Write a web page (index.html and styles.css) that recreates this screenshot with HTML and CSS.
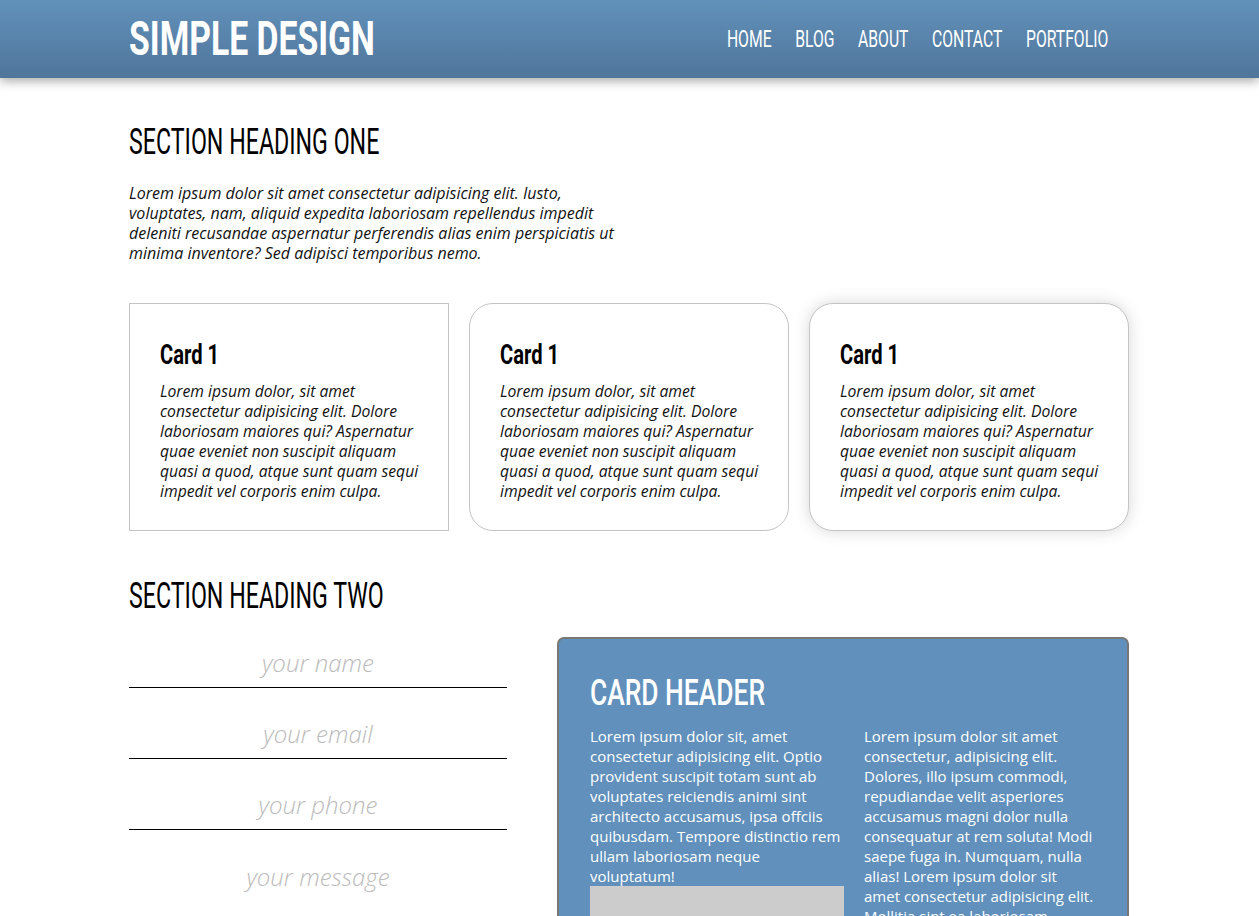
FILE: index.html
```html
<!DOCTYPE html>
<html lang="en">
<head>
<meta charset="utf-8">
<title>Simple Design</title>
<link rel="stylesheet" href="styles.css">
</head>
<body>
<header class="site-header">
  <div class="container header-inner">
    <h1 class="logo"><span class="squish">SIMPLE DESIGN</span></h1>
    <nav class="nav">
      <a href="#">HOME</a>
      <a href="#">BLOG</a>
      <a href="#">ABOUT</a>
      <a href="#">CONTACT</a>
      <a href="#">PORTFOLIO</a>
    </nav>
  </div>
</header>
<main class="container">
  <section class="section-one">
    <h2 class="section-heading"><span class="squish">SECTION HEADING ONE</span></h2>
    <p class="intro">Lorem ipsum dolor sit amet consectetur adipisicing elit. Iusto, voluptates, nam, aliquid expedita laboriosam repellendus impedit deleniti recusandae aspernatur perferendis alias enim perspiciatis ut minima inventore? Sed adipisci temporibus nemo.</p>
    <div class="cards">
      <div class="card card-square">
        <h3 class="card-title"><span class="squish">Card 1</span></h3>
        <p class="card-text">Lorem ipsum dolor, sit amet consectetur adipisicing elit. Dolore laboriosam maiores qui? Aspernatur quae eveniet non suscipit aliquam quasi a quod, atque sunt quam sequi impedit vel corporis enim culpa.</p>
      </div>
      <div class="card card-round">
        <h3 class="card-title"><span class="squish">Card 1</span></h3>
        <p class="card-text">Lorem ipsum dolor, sit amet consectetur adipisicing elit. Dolore laboriosam maiores qui? Aspernatur quae eveniet non suscipit aliquam quasi a quod, atque sunt quam sequi impedit vel corporis enim culpa.</p>
      </div>
      <div class="card card-round card-shadow">
        <h3 class="card-title"><span class="squish">Card 1</span></h3>
        <p class="card-text">Lorem ipsum dolor, sit amet consectetur adipisicing elit. Dolore laboriosam maiores qui? Aspernatur quae eveniet non suscipit aliquam quasi a quod, atque sunt quam sequi impedit vel corporis enim culpa.</p>
      </div>
    </div>
  </section>
  <section class="section-two">
    <h2 class="section-heading"><span class="squish">SECTION HEADING TWO</span></h2>
    <div class="two-col">
      <form class="contact-form">
        <input class="field" type="text" placeholder="your name">
        <input class="field" type="email" placeholder="your email">
        <input class="field" type="tel" placeholder="your phone">
        <textarea class="field field-msg" placeholder="your message"></textarea>
      </form>
      <div class="blue-card">
        <h2 class="blue-title"><span class="squish">CARD HEADER</span></h2>
        <div class="blue-cols">
          <div class="blue-col">
            <p>Lorem ipsum dolor sit, amet consectetur adipisicing elit. Optio provident suscipit totam sunt ab voluptates reiciendis animi sint architecto accusamus, ipsa offciis quibusdam. Tempore distinctio rem ullam laboriosam neque voluptatum!</p>
            <div class="img-placeholder"></div>
          </div>
          <div class="blue-col">
            <p>Lorem ipsum dolor sit amet consectetur, adipisicing elit. Dolores, illo ipsum commodi, repudiandae velit asperiores accusamus magni dolor nulla consequatur at rem soluta! Modi saepe fuga in. Numquam, nulla alias! Lorem ipsum dolor sit amet consectetur adipisicing elit. Mollitia sint ea laboriosam.</p>
          </div>
        </div>
      </div>
    </div>
  </section>
</main>
</body>
</html>
```

FILE: styles.css
```css
* { box-sizing: border-box; }
html, body { margin: 0; padding: 0; }
body {
  background: #fff;
  color: #111;
  font-family: "Open Sans", "Noto Sans", sans-serif;
}
.container {
  width: 1000px;
  margin-left: max(0px, calc((100% - 1001px) / 2));
}
.squish {
  display: inline-block;
  white-space: nowrap;
  transform-origin: left center;
}
.site-header {
  height: 78px;
  background: linear-gradient(to bottom, #6191ba, #50759b);
  box-shadow: 0 3px 10px rgba(0,0,0,0.35);
}
.header-inner {
  display: flex;
  align-items: center;
  justify-content: space-between;
  height: 78px;
}
.logo {
  margin: 0;
  color: #fff;
  font-family: "Roboto", sans-serif;
  font-weight: 700;
  font-size: 48px;
  line-height: 56px;
}
.logo .squish { transform: scaleX(0.703); }
.nav {
  display: flex;
  gap: 36px;
  margin-right: 21px;
  transform: scaleX(0.655);
  transform-origin: right center;
}
.nav a {
  color: #fff;
  text-decoration: none;
  font-family: "Roboto", sans-serif;
  font-size: 24px;
}
.section-heading {
  margin: 0;
  font-family: "Roboto", sans-serif;
  font-weight: 400;
  font-size: 37px;
  color: #000;
  line-height: 40px;
}
.section-heading .squish { transform: scaleX(0.627); }
.section-one { padding-top: 44px; }
.intro {
  margin: 21px 0 0;
  width: 490px;
  font-style: italic;
  font-size: 16px;
  line-height: 20px;
}
.cards {
  display: grid;
  grid-template-columns: repeat(3, 1fr);
  gap: 20px;
  margin-top: 40px;
}
.card {
  height: 228px;
  border: 1px solid #c4c4c4;
  padding: 36px 27px 30px 30px;
  background: #fff;
}
.card-round { border-radius: 24px; }
.card-shadow { box-shadow: 0 0 16px rgba(0,0,0,0.16); }
.card-title {
  margin: 0;
  font-family: "Roboto", sans-serif;
  font-weight: 700;
  font-size: 28px;
  line-height: 30px;
  color: #000;
}
.card-title .squish { transform: scaleX(0.72); }
.card-text {
  margin: 11px 0 0;
  font-style: italic;
  font-size: 15.7px;
  line-height: 20px;
}
.section-two { padding-top: 45px; }
.two-col {
  display: grid;
  grid-template-columns: 378px 572px;
  justify-content: space-between;
  margin-top: 21px;
}
.contact-form {
  display: flex;
  flex-direction: column;
  gap: 20px;
}
.field {
  display: block;
  width: 100%;
  height: 51px;
  border: 0;
  border-bottom: 1px solid #000;
  background: transparent;
  text-align: center;
  font-family: "Open Sans", sans-serif;
  font-style: italic;
  font-weight: 300;
  font-size: 24px;
  outline: none;
  padding: 0;
}
.field::placeholder { color: #bbb; }
.field-msg {
  border-bottom: 0;
  resize: none;
  height: 80px;
  padding-top: 10px;
}
.blue-card {
  background: #6090bb;
  border: 2px solid #777;
  border-radius: 7px;
  padding: 34px 32px 30px 31px;
  color: #fff;
  height: 300px;
}
.blue-title {
  margin: 0;
  font-family: "Roboto", sans-serif;
  font-weight: 500;
  font-size: 36px;
  line-height: 40px;
}
.blue-title .squish { transform: scaleX(0.733); }
.blue-cols {
  display: grid;
  grid-template-columns: 254px 1fr;
  gap: 20px;
  margin-top: 13px;
}
.blue-col p {
  margin: 0;
  font-size: 15px;
  line-height: 20px;
}
.img-placeholder {
  height: 120px;
  background: #ccc;
}
```
